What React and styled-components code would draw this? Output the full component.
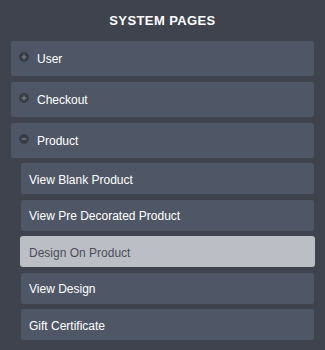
import React from 'react'
import styled, { createGlobalStyle } from 'styled-components'

//-----------------------------------------------------------------------------
// Data
//-----------------------------------------------------------------------------
const sections = [
  { id: 1, name: 'User', open: false, pages: [] },
  { id: 2, name: 'Checkout', open: false, pages: [] },
  {
    id: 3,
    name: 'Product',
    open: true,
    pages: [
      { id: 1, name: 'View Blank Product' },
      { id: 2, name: 'View Pre Decorated Product' },
      { id: 3, name: 'Design On Product', active: true },
      { id: 4, name: 'View Design' },
      { id: 5, name: 'Gift Certificate' }
    ]
  }
]

//-----------------------------------------------------------------------------
// Component
//-----------------------------------------------------------------------------
const ToggleIcon = ({ open }) => (
  <Icon viewBox="0 0 10 10">
    <circle cx="5" cy="5" r="5" fill="#393d45" />
    <line x1="2.6" y1="5" x2="7.4" y2="5" stroke="#6c717a" strokeWidth="1.6" />
    {!open && (
      <line x1="5" y1="2.6" x2="5" y2="7.4" stroke="#6c717a" strokeWidth="1.6" />
    )}
  </Icon>
)

const App = () => {
  return (
    <>
      <GlobalStyle />
      <Panel>
        <Title>SYSTEM PAGES</Title>
        <SectionList>
          {sections.map(section => (
            <React.Fragment key={section.id}>
              <Section>
                <ToggleIcon open={section.open} />
                {section.name}
              </Section>
              {section.open && (
                <PageList>
                  {section.pages.map(page => (
                    <Page key={page.id} $active={page.active}>
                      {page.name}
                    </Page>
                  ))}
                </PageList>
              )}
            </React.Fragment>
          ))}
        </SectionList>
      </Panel>
    </>
  )
}

//-----------------------------------------------------------------------------
// Styled Components
//-----------------------------------------------------------------------------
const GlobalStyle = createGlobalStyle`
  html, body {
    margin: 0;
    background: #3e434e;
  }
  body {
    font-family: "Liberation Sans", Arial, sans-serif;
  }
`

const Panel = styled.div`
  width: 325px;
  height: 350px;
  padding: 0 11px;
  box-sizing: border-box;
  background: #3e434e;
`

const Title = styled.div`
  height: 41px;
  display: flex;
  align-items: center;
  justify-content: center;
  color: #ffffff;
  font-size: 13px;
  font-weight: bold;
  letter-spacing: 0.4px;
`

const SectionList = styled.div`
  display: flex;
  flex-direction: column;
  gap: 6px;
`

const Section = styled.div`
  height: 35px;
  display: flex;
  align-items: center;
  gap: 8px;
  padding-left: 8px;
  background: #4f5766;
  border-radius: 2px;
  color: #ffffff;
  font-size: 12px;
`

const Icon = styled.svg`
  width: 10px;
  height: 10px;
  margin-bottom: 4px;
  flex-shrink: 0;
`

const PageList = styled.div`
  display: flex;
  flex-direction: column;
  gap: 5.5px;
  margin: -1px 0 0 10px;
`

const Page = styled.div`
  height: 31px;
  display: flex;
  align-items: center;
  padding: 2px 0 0 ${p => (p.$active ? '9px' : '8px')};
  box-sizing: border-box;
  margin: ${p => (p.$active ? '0 -1px' : '0')};
  background: ${p => (p.$active ? '#bcbec5' : '#4f5766')};
  border-radius: ${p => (p.$active ? '3px' : '2px')};
  color: ${p => (p.$active ? '#4a4f5a' : '#ffffff')};
  font-size: 12px;
`

export default App
